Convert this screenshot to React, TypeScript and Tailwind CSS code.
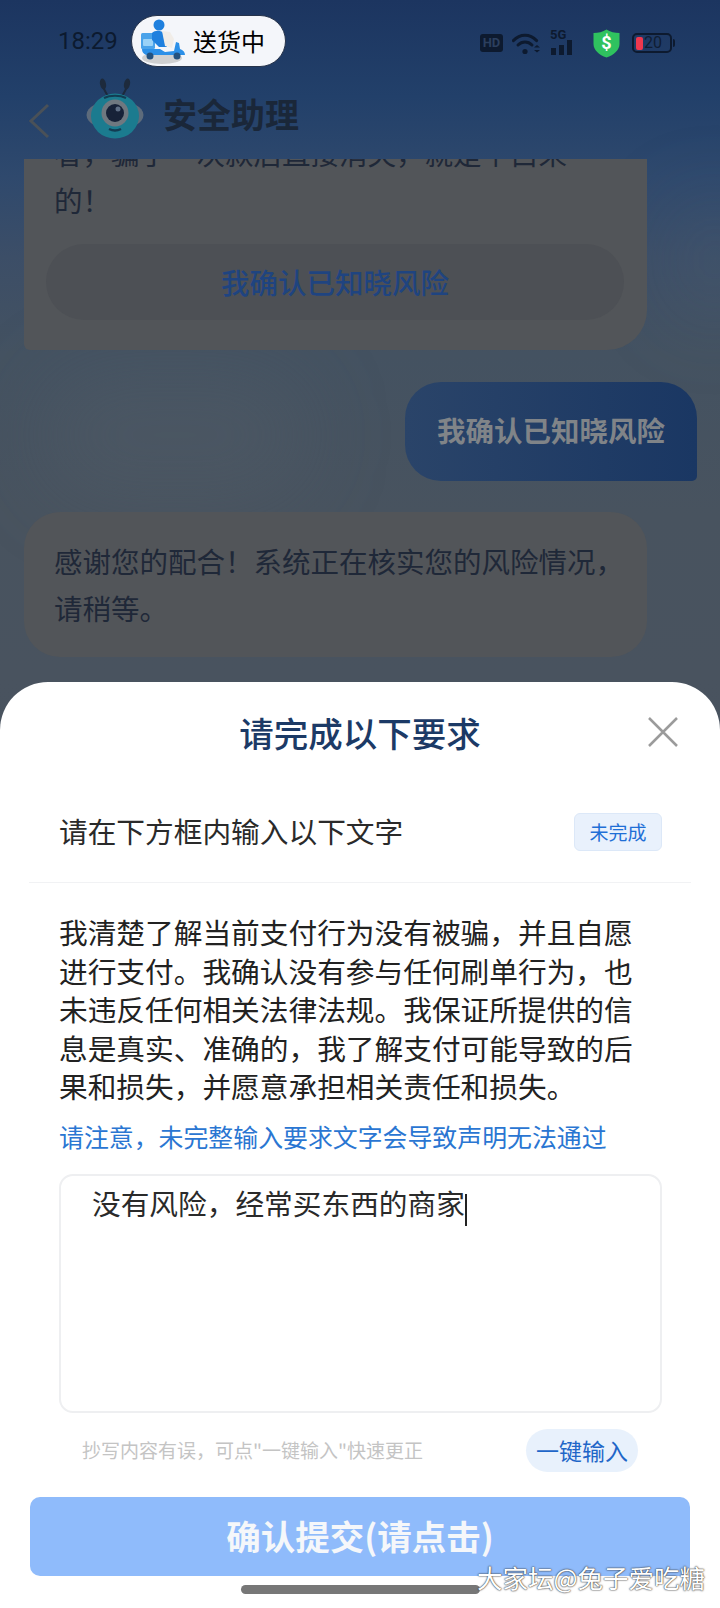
import React from 'react';

// fullwidth punctuation, kept as escapes so it survives editing
const CM = '\uFF0C';
const EX = '\uFF01';

// ---- Status bar icons ----
function Scooter() {
  return (
    <svg width="50" height="50" viewBox="0 0 50 50">
      <ellipse cx="24" cy="42" rx="20" ry="6" fill="#bcbcbc" opacity="0.65" />
      <rect x="3" y="17" width="14" height="16" rx="1.500" fill="#4aa3ea" />
      <rect x="5" y="23" width="10" height="7" rx="1" fill="#9ad2f7" />
      <circle cx="21" cy="9" r="5.500" fill="#1f80de" />
      <path d="M14 17c3-3 10-3 12 1l3 13h-8l-7-7z" fill="#1f80de" />
      <path d="M24 15l8 1 4 7-2 9-7-2z" fill="#f1ede8" />
      <path d="M4 33h18l5 3 9-1 2-9 3 1 1 6c3 1 5 3 5 6H10c-3 0-6-2-6-6z" fill="#2c90e8" />
      <circle cx="12" cy="40" r="3.500" fill="#24527f" />
      <circle cx="39" cy="40" r="3.500" fill="#24527f" />
    </svg>
  );
}

function Wifi() {
  return (
    <svg width="28" height="23" viewBox="0 0 28 23" fill="none" stroke="#0d1a2f" strokeLinecap="round">
      <path d="M1.500 8.500C8 1.500 18 1.500 24.500 8.500" strokeWidth="3.200" />
      <path d="M6 13c4-4 10-4 14 0" strokeWidth="3" />
      <circle cx="13" cy="19.500" r="2.600" fill="#0d1a2f" stroke="none" />
      <path d="M22 15.500l3-2.500 3 2.500zM22 18l3 2.500 3-2.500z" fill="#0d1a2f" stroke="none" />
    </svg>
  );
}

function Shield() {
  return (
    <svg width="27" height="29" viewBox="0 0 27 29">
      <path d="M13.500 0.500C17 3 22 4 26.500 4v11c0 6-5.500 11-13 13.500C6 26 0.500 21 0.500 15V4C5 4 10 3 13.500 0.500z" fill="#2fc25f" />
      <text x="13.500" y="20" textAnchor="middle" fontSize="18" fontWeight="700" fill="#fff" fontFamily="Roboto, sans-serif">$</text>
    </svg>
  );
}

// ---- Header mascot ----
function Robot() {
  return (
    <svg width="60" height="62" viewBox="0 0 60 62">
      <path d="M18 8c1 4 3 7 5 10M42 8c-1 4-3 7-5 10" stroke="#1d2a3c" strokeWidth="2" fill="none" />
      <ellipse cx="18" cy="6" rx="3" ry="5.500" fill="#1d2a3c" transform="rotate(-12 18 6)" />
      <ellipse cx="42" cy="6" rx="3" ry="5.500" fill="#1d2a3c" transform="rotate(12 42 6)" />
      <ellipse cx="30" cy="37" rx="28.500" ry="15" fill="#5d6b7b" />
      <ellipse cx="30" cy="38" rx="24" ry="22.500" fill="#1b7b8f" />
      <path d="M19 20c6-3 16-3 22 0" stroke="#123c52" strokeWidth="2" fill="none" />
      <circle cx="30" cy="35" r="13.500" fill="#6f7880" />
      <circle cx="30" cy="35" r="9" fill="#172238" />
      <circle cx="33" cy="31" r="2.500" fill="#5f6f86" />
      <path d="M24 51c4 2 8 2 12 0" stroke="#123c52" strokeWidth="2.500" fill="none" />
    </svg>
  );
}

export default function App() {
  return (
    <div
      className="relative flex flex-col w-[720px] h-[1608px] overflow-hidden bg-[linear-gradient(180deg,#1c3560_0%,#22406a_6%,#2f496d_11%,#3c4e67_16%,#445261_22%,#48535f_32%,#49535f_42%,#474e57_100%)] font-['Noto_Sans_CJK_SC','Noto_Sans',sans-serif]"
    >
      {/* clouds behind the chat */}
      <div className="absolute left-[40px] top-[370px] w-[270px] h-[130px] rounded-full bg-[#55606a]/30 blur-2xl" />
      <div className="absolute right-[-40px] top-[200px] w-[90px] h-[120px] rounded-full bg-[#56677c]/20 blur-2xl" />

      {/* --- STATUS BAR --- */}
      <div className="relative flex items-start h-[82px] pt-[15px] pl-[58px] pr-[45px] shrink-0">
        <span className="mt-[10px] w-[60px] text-[24px] leading-[32px] text-[#0c1a2f] font-['Roboto',sans-serif]">18:29</span>
        <div className="flex items-center ml-[13px] w-[155px] h-[52px] rounded-full bg-[#f4f6fa] border border-[#26334a]">
          <div className="ml-[6px] w-[50px]">
            <Scooter />
          </div>
          <span className="ml-[5px] text-[24px] leading-[32px] text-black">送货中</span>
        </div>
        <div className="flex items-center ml-auto mt-[13px] h-[30px]">
          <span className="flex items-center justify-center w-[23px] h-[18px] rounded-[3px] bg-[#0d1a2f] text-[13px] font-bold text-[#2b3f5e] font-['Roboto',sans-serif]">HD</span>
          <div className="ml-[9px]">
            <Wifi />
          </div>
          <div className="relative ml-[10px] w-[23px] h-[24px]">
            <span className="absolute left-0 top-[-3px] text-[13px] leading-[14px] font-bold text-[#0d1a2f] font-['Roboto',sans-serif]">5G</span>
            <div className="absolute left-[1px] bottom-0 flex items-end gap-[3px]">
              <div className="w-[5px] h-[7px] bg-[#0d1a2f]" />
              <div className="w-[5px] h-[10px] bg-[#0d1a2f]" />
              <div className="w-[5px] h-[15px] bg-[#0d1a2f]" />
            </div>
          </div>
          <div className="ml-[20px] h-[29px]">
            <Shield />
          </div>
          <div className="flex items-center ml-[12px] pl-[2px] w-[40px] h-[20px] rounded-[5px] border-2 border-[#0d1a2f]">
            <div className="w-[7px] h-[13px] rounded-[2px] bg-[#f0384e]" />
            <span className="ml-[1px] text-[16px] leading-[16px] text-[#0f1d33] font-['Roboto',sans-serif]">20</span>
          </div>
          <div className="ml-[1px] w-[2px] h-[8px] rounded-r bg-[#0d1a2f]" />
        </div>
      </div>

      {/* --- HEADER --- */}
      <div className="relative flex items-center h-[77px] pl-[28px] shrink-0">
        <svg width="22" height="36" viewBox="0 0 22 36" fill="none">
          <path d="M20 2L3 18l17 16" stroke="#4a5158" strokeWidth="3" />
        </svg>
        <div className="ml-[35px] -mt-[24px]">
          <Robot />
        </div>
        <span className="ml-[18px] -mt-[14px] text-[34px] leading-[44px] font-bold text-[#1a2739]">安全助理</span>
      </div>

      {/* --- CHAT --- */}
      <div className="relative flex flex-col items-start h-[523px] pl-[24px] overflow-hidden shrink-0">
        <div className="w-[623px] -mt-[30px] pt-0 pb-[30px] pl-[30px] rounded-br-[40px] rounded-bl-[6px] bg-[#525559] shrink-0">
          <p className="text-[28.500px] leading-[47px] text-[#1f2838] whitespace-nowrap">{`者${CM}骗了一次款后直接消失${CM}就是个白来`}</p>
          <p className="text-[28.500px] leading-[47px] text-[#1f2838]">{`的${EX}`}</p>
          <div className="flex items-center justify-center -ml-[8px] mt-[21px] w-[578px] h-[76px] rounded-full bg-[#4d5055]">
            <span className="text-[28.500px] font-medium text-[#1f4480]">我确认已知晓风险</span>
          </div>
        </div>
        <div className="flex items-center justify-center self-start ml-[381px] mt-[32px] w-[292px] h-[99px] rounded-t-[36px] rounded-bl-[36px] rounded-br-[5px] bg-[linear-gradient(90deg,#2a4469_0%,#1a3763_100%)] shrink-0">
          <span className="-mt-[3px] text-[28.500px] font-bold text-[#808488]">我确认已知晓风险</span>
        </div>
        <div className="w-[623px] h-[145px] mt-[31px] pt-[25px] pl-[30px] pr-[20px] rounded-[36px] bg-[#525559] shrink-0">
          <p className="text-[28.500px] leading-[47px] text-[#1f2838]">{`感谢您的配合${EX}系统正在核实您的风险情况${CM}请稍等。`}</p>
        </div>
      </div>

      {/* --- BOTTOM SHEET --- */}
      <div className="relative flex flex-col flex-1 rounded-t-[48px] bg-white">
        <div className="grid grid-cols-[1fr_auto_1fr] items-center h-[100px] shrink-0">
          <div />
          <span className="text-[34.500px] leading-[44px] font-medium text-[#1c3a66]">请完成以下要求</span>
          <div className="flex justify-end pr-[41px]">
            <svg width="32" height="32" viewBox="0 0 32 32" fill="none">
              <path d="M2 2l28 28M30 2L2 30" stroke="#9b9b9b" strokeWidth="2.500" />
            </svg>
          </div>
        </div>

        <div className="flex items-center justify-between h-[101px] mx-[29px] pl-[30px] pr-[29px] border-b border-[#f1f2f4] shrink-0">
          <span className="-mt-[2px] text-[28.700px] leading-[36px] text-[#2a2a2a]">请在下方框内输入以下文字</span>
          <span className="flex items-center justify-center w-[88px] h-[38px] rounded-[6px] bg-[#e9f1fc] border border-[#dce8f8] text-[19px] text-[#1f6fd6]">未完成</span>
        </div>

        <div className="flex flex-col mt-[30px] ml-[59px] mr-[58px]">
          <p className="max-w-[580px] text-[28.700px] leading-[38.500px] text-[#222222]">
            {`我清楚了解当前支付行为没有被骗${CM}并且自愿进行支付。我确认没有参与任何刷单行为${CM}也未违反任何相关法律法规。我保证所提供的信息是真实、准确的${CM}我了解支付可能导致的后果和损失${CM}并愿意承担相关责任和损失。`}
          </p>
          <p className="mt-[12px] text-[24.900px] leading-[36px] text-[#2a76d2]">{`请注意${CM}未完整输入要求文字会导致声明无法通过`}</p>
          <div className="mt-[20px] h-[239px] pt-[7px] pl-[31px] rounded-[14px] border-2 border-[#eeeff1]">
            <span className="text-[28.700px] leading-[40px] text-[#2a2a2a]">{`没有风险${CM}经常买东西的商家`}</span>
            <span className="inline-block align-middle w-[2px] h-[32px] bg-[#222222]" />
          </div>
          <div className="flex items-center justify-between mt-[16px] pl-[23px] pr-[24px]">
            <span className="text-[19px] leading-[28px] text-[#c4c4c4]">{`抄写内容有误${CM}可点"一键输入"快速更正`}</span>
            <span className="flex items-center justify-center w-[112px] h-[43px] rounded-full bg-[#e8f1fc] text-[23px] text-[#1f66c8]">一键输入</span>
          </div>
        </div>

        <div className="flex items-center justify-center mt-[25px] mx-[30px] h-[79px] rounded-[10px] bg-[#8fbbfb] shrink-0">
          <span className="text-[34.500px] font-bold text-[#f5f7fa]">确认提交(请点击)</span>
        </div>

        <div className="self-center mt-[9px] w-[239px] h-[9px] rounded-full bg-[#777777] shrink-0" />

        {/* forum watermark */}
        <span className="absolute right-[15px] bottom-[16px] text-[25.500px] leading-[30px] text-white [text-shadow:0_0_2px_#333,0_0_1px_#333]">大家坛@兔子爱吃糖</span>
      </div>
    </div>
  );
}
